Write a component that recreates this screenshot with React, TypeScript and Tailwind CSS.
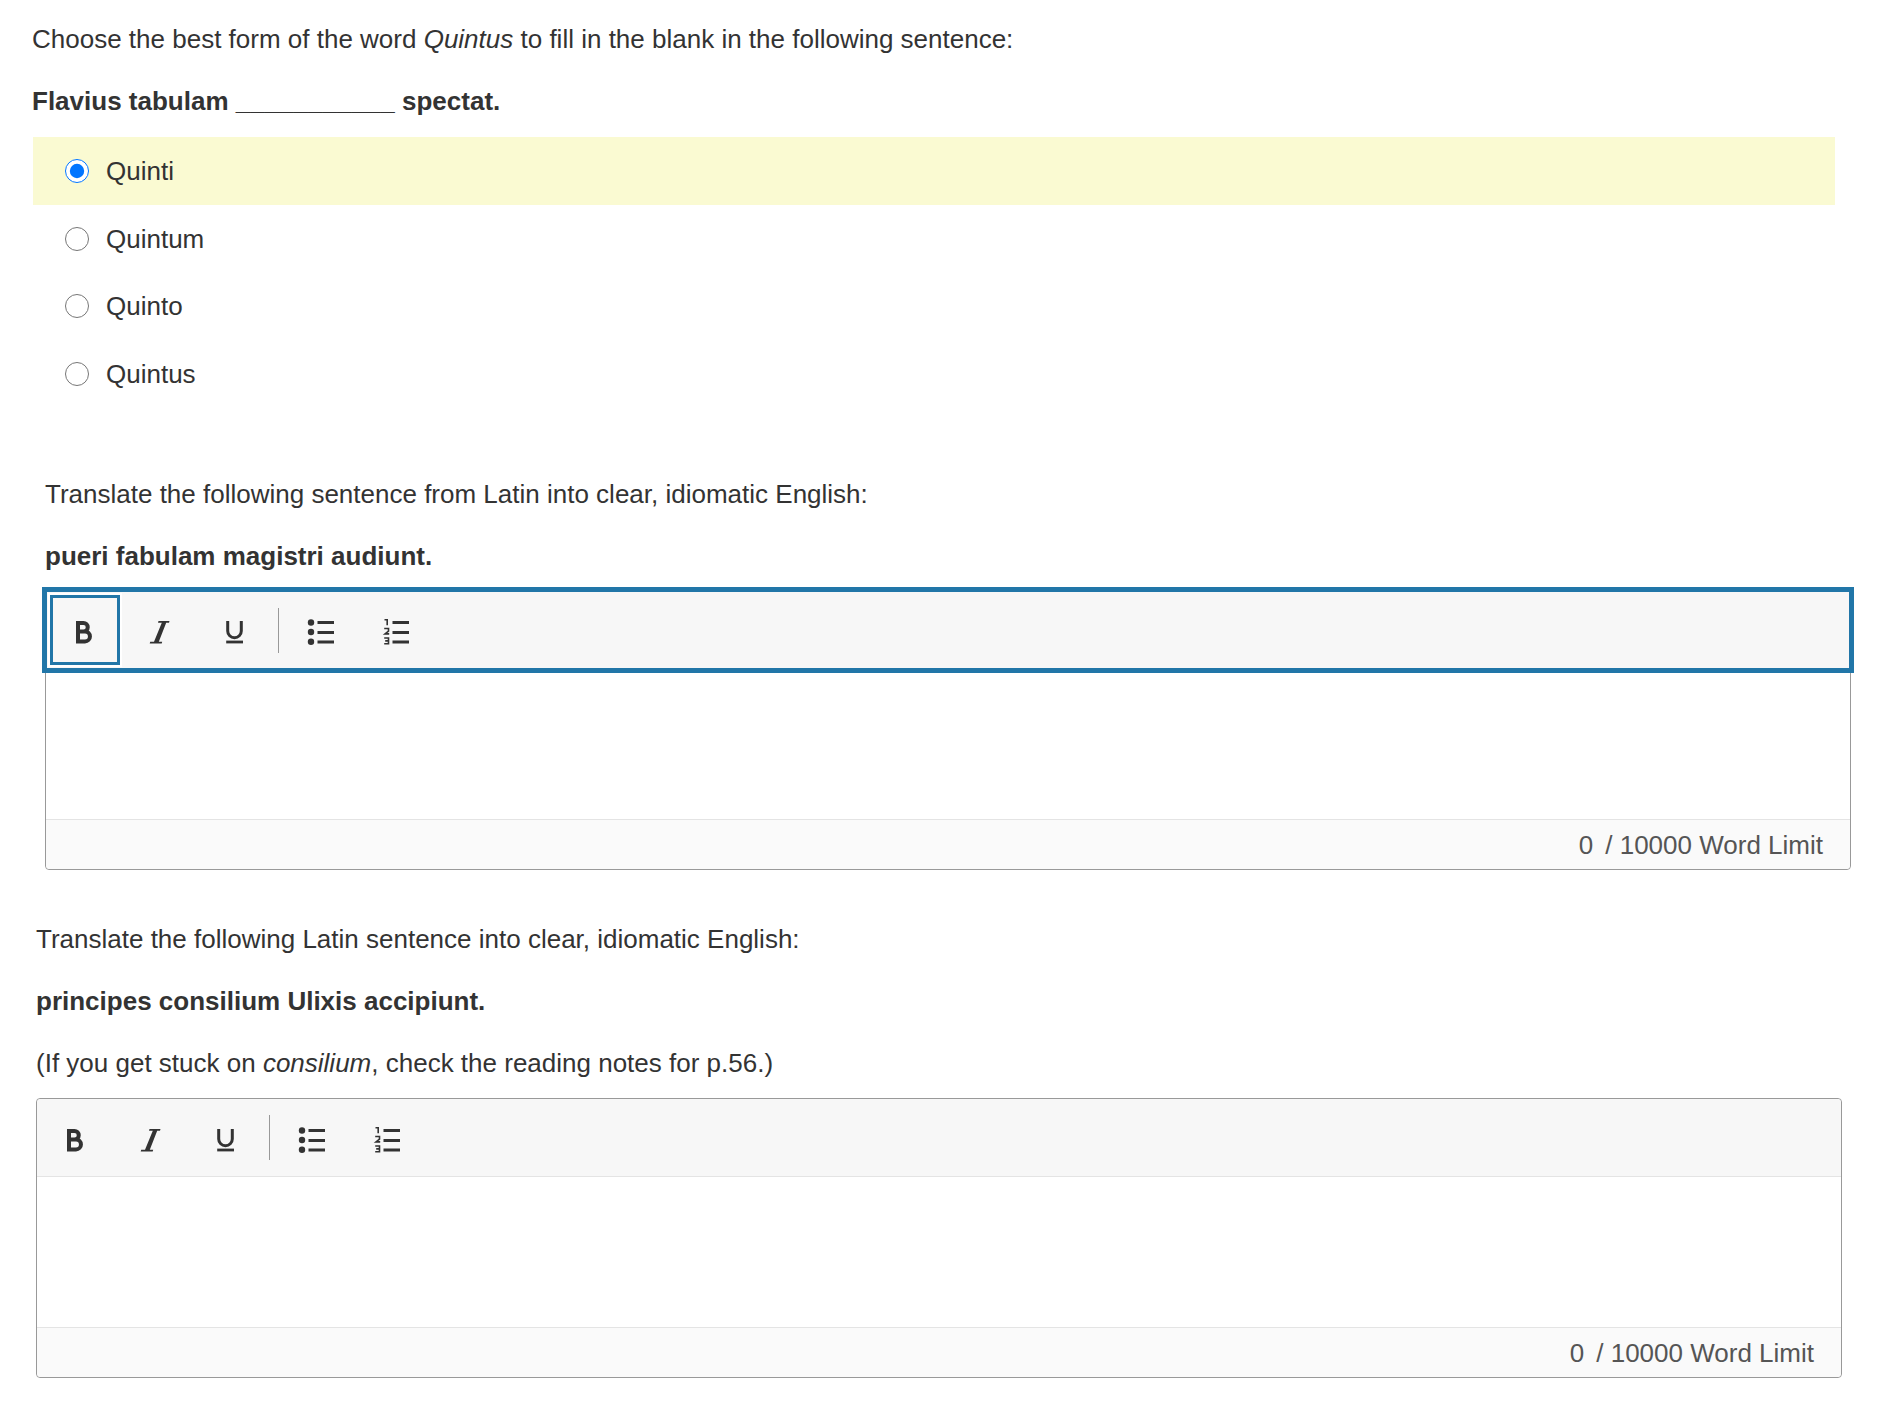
import { useState, type ReactNode } from "react";

const choices = ["Quinti", "Quintum", "Quinto", "Quintus"];

function BoldIcon() {
  return (
    <svg viewBox="0 0 30 30" className="h-[30px] w-[30px]" fill="none" stroke="#333" strokeWidth="4">
      <path d="M8 8h5.500a4 4 0 0 1 0 8.500H8M8 16.500h7a4.600 4.600 0 0 1 0 9.900H8M8 6v22.400" />
    </svg>
  );
}

function ItalicIcon() {
  return (
    <svg viewBox="0 0 30 30" className="h-[30px] w-[30px]" fill="#333">
      <path d="M12.500 6h11l-.5 1.800h-2.800L12.800 26.700h3.400l-.5 1.800h-12l.5-1.800h3.800L15.800 7.800h-3.800z" />
    </svg>
  );
}

function UnderlineIcon() {
  return (
    <svg viewBox="0 0 30 30" className="h-[30px] w-[30px]" fill="none" stroke="#333">
      <path d="M5.700 6v10a6.800 6.800 0 0 0 13.600 0V6" strokeWidth="3" />
      <path d="M4.200 27h16.800" strokeWidth="2.800" />
    </svg>
  );
}

function BulletIcon() {
  return (
    <svg viewBox="0 0 30 30" className="h-[30px] w-[30px]" fill="#333">
      <circle cx="6" cy="7.500" r="3.200" />
      <circle cx="6" cy="17" r="3.200" />
      <circle cx="6" cy="26.800" r="3.200" />
      <path d="M12.500 6h16.500v3H12.500zM12.500 16h16.500v3H12.500zM12.500 25.500h16.500v3H12.500z" />
    </svg>
  );
}

function NumberedIcon() {
  return (
    <svg viewBox="0 0 30 30" className="h-[30px] w-[30px]" fill="#333">
      <path d="M11.500 6h16.500v3H11.500zM11.500 16h16.500v3H11.500zM11.500 25.500h16.500v3H11.500z" />
      <path
        d="M3.500 4.700h2.700v5.500M3.200 13.500h4.300v2.600L4 18.900h4.200M3.200 23h4.300v5.700H3.200M4.200 25.900h3.300"
        fill="none"
        stroke="#333"
        strokeWidth="1.600"
      />
    </svg>
  );
}

function ToolButton({ label, focused, children }: { label: string; focused?: boolean; children: ReactNode }) {
  return (
    <button
      type="button"
      aria-label={label}
      className={
        focused
          ? "flex h-[70px] w-[70px] items-center justify-center border-3 border-[#2176a8] ring-2 ring-white"
          : "flex h-[70px] w-[70px] items-center justify-center"
      }
    >
      {children}
    </button>
  );
}

function Editor({ label, focused }: { label: string; focused?: boolean }) {
  return (
    <div className="rounded-sm border border-[#999]">
      <div
        role="toolbar"
        aria-label="Formatting"
        className={
          focused
            ? "relative flex h-[78px] items-center gap-[6px] bg-[#f7f7f7] pl-1 outline-5 -outline-offset-1 outline-[#2176a8]"
            : "flex h-[78px] items-center gap-[6px] rounded-t-sm border-b border-[#e4e4e4] bg-[#f7f7f7] pl-1"
        }
      >
        <ToolButton label="Bold" focused={focused}><BoldIcon /></ToolButton>
        <ToolButton label="Italic"><ItalicIcon /></ToolButton>
        <ToolButton label="Underline"><UnderlineIcon /></ToolButton>
        <div className="h-[45px] w-px bg-[#999]" />
        <ToolButton label="Bulleted list"><BulletIcon /></ToolButton>
        <ToolButton label="Numbered list"><NumberedIcon /></ToolButton>
      </div>
      <textarea aria-label={label} className="block h-[150px] w-full resize-none bg-transparent px-6 py-4 leading-8 outline-none" />
      <div className="flex h-[50px] items-center justify-end gap-3 rounded-b-sm border-t border-[#e4e4e4] bg-[#fafafa] pr-[27px] text-[#555]">
        <span>0</span>
        <span>/ 10000 Word Limit</span>
      </div>
    </div>
  );
}

export default function App() {
  const [choice, setChoice] = useState("Quinti");
  return (
    <main className="bg-white pt-2 pb-6 font-['Liberation_Sans',Arial,sans-serif] text-[26px] leading-[62px] text-[#333]">
      <section className="pr-[60px] pl-8">
        <p>
          Choose the best form of the word <em>Quintus</em> to fill in the blank in the following sentence:
        </p>
        <p className="font-bold">Flavius tabulam ___________ spectat.</p>
        <fieldset className="mx-px mt-[5px] grid h-[271px] grid-rows-4">
          {choices.map((c) => (
            <label key={c} className="flex items-center gap-[17px] pl-8 has-checked:bg-[#fafad2]">
              <input
                type="radio"
                name="form"
                checked={choice === c}
                onChange={() => setChoice(c)}
                className="h-6 w-6 accent-[#0075ff]"
              />
              {c}
            </label>
          ))}
        </fieldset>
      </section>

      <section className="mt-[55px] pr-[45px] pl-[45px]">
        <p>Translate the following sentence from Latin into clear, idiomatic English:</p>
        <p className="mb-[3px] font-bold">pueri fabulam magistri audiunt.</p>
        <Editor label="Translation of pueri fabulam magistri audiunt" focused />
      </section>

      <section className="mt-[38px] pr-[54px] pl-9">
        <p>Translate the following Latin sentence into clear, idiomatic English:</p>
        <p className="font-bold">principes consilium Ulixis accipiunt.</p>
        <p className="mb-[4px]">
          (If you get stuck on <em>consilium</em>, check the reading notes for p.56.)
        </p>
        <Editor label="Translation of principes consilium Ulixis accipiunt" />
      </section>
    </main>
  );
}
